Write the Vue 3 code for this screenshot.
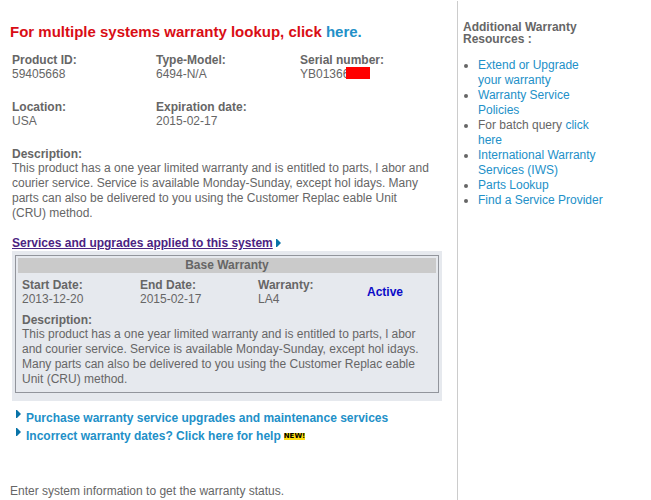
<script setup>
const description =
  'This product has a one year limited warranty and is entitled to parts, l abor and courier service. Service is available Monday-Sunday, except hol idays. Many parts can also be delivered to you using the Customer Replac eable Unit (CRU) method.'

const warrantyFields = [
  { label: 'Start Date:', value: '2013-12-20' },
  { label: 'End Date:', value: '2015-02-17' },
  { label: 'Warranty:', value: 'LA4' },
]
</script>

<template>
  <div class="page">
    <main class="main">
      <h1 class="lookup">For multiple systems warranty lookup, click <a href="#">here.</a></h1>

      <dl class="details">
        <div><dt>Product ID:</dt><dd>59405668</dd></div>
        <div><dt>Type-Model:</dt><dd>6494-N/A</dd></div>
        <div><dt>Serial number:</dt><dd class="serial">YB01366<span class="redaction"></span></dd></div>
        <div><dt>Location:</dt><dd>USA</dd></div>
        <div><dt>Expiration date:</dt><dd>2015-02-17</dd></div>
      </dl>

      <section class="description">
        <h2>Description:</h2>
        <p>{{ description }}</p>
      </section>

      <div class="services">
        <a href="#">Services and upgrades applied to this system</a>
        <svg class="arrow" viewBox="0 0 5 8" aria-hidden="true"><path d="M0 0H1L5 4L1 8H0Z" /></svg>
      </div>

      <section class="panel">
        <div class="frame">
          <h2 class="bar">Base Warranty</h2>
          <div class="summary">
            <dl class="dates">
              <div v-for="f in warrantyFields" :key="f.label"><dt>{{ f.label }}</dt><dd>{{ f.value }}</dd></div>
            </dl>
            <strong class="status">Active</strong>
          </div>
          <div class="terms">
            <h2>Description:</h2>
            <p>{{ description }}</p>
          </div>
        </div>
      </section>

      <ul class="actions">
        <li>
          <svg class="arrow" viewBox="0 0 5 8" aria-hidden="true"><path d="M0 0H1L5 4L1 8H0Z" /></svg>
          <a href="#">Purchase warranty service upgrades and maintenance services</a>
        </li>
        <li>
          <svg class="arrow" viewBox="0 0 5 8" aria-hidden="true"><path d="M0 0H1L5 4L1 8H0Z" /></svg>
          <a href="#">Incorrect warranty dates? Click here for help</a>
          <span class="new">NEW!</span>
        </li>
      </ul>

      <p class="prompt">Enter system information to get the warranty status.</p>
    </main>

    <aside class="side">
      <h2>Additional Warranty Resources :</h2>
      <ul>
        <li><a href="#">Extend or Upgrade your warranty</a></li>
        <li><a href="#">Warranty Service Policies</a></li>
        <li>For batch query <a href="#">click here</a></li>
        <li><a href="#">International Warranty Services (IWS)</a></li>
        <li><a href="#">Parts Lookup</a></li>
        <li><a href="#">Find a Service Provider</a></li>
      </ul>
    </aside>
  </div>
</template>

<style>
body {
  margin: 0;
  background: #fff;
}
</style>

<style scoped>
.page {
  display: grid;
  grid-template-columns: minmax(0, 1fr) 194px;
  min-height: 100vh;
  box-sizing: border-box;
  padding-top: 1px;
  font: 12px/15px "Liberation Sans", Arial, sans-serif;
  color: #666;
}
h1, h2, p, dl, dd, ul {
  margin: 0;
  padding: 0;
}
h2, dt {
  font-size: 12px;
  font-weight: bold;
  line-height: 14px;
}
dd {
  line-height: 14px;
}
a {
  color: #2290c8;
  text-decoration: none;
}
.main {
  padding: 22px 15px 0 12px;
}
.lookup {
  margin: 0 0 12px -2px;
  font-size: 15px;
  line-height: 18px;
  color: #d90d15;
}
.details {
  display: grid;
  grid-template-columns: 144px 144px 1fr;
  row-gap: 19px;
}
.serial {
  position: relative;
}
.redaction {
  position: absolute;
  left: 46px;
  top: 0;
  width: 24px;
  height: 12px;
  background: #f00;
}
.description {
  margin-top: 19px;
  padding-right: 10px;
}
.services {
  display: flex;
  align-items: center;
  gap: 3px;
  margin-top: 14px;
  line-height: 16px;
  font-weight: bold;
}
.services a {
  color: #4b2382;
  text-decoration: underline;
}
.arrow {
  flex: none;
  width: 5px;
  height: 8px;
  fill: #0873a8;
}
.panel {
  padding: 4px 3px 8px;
  background: #e6e9ee;
}
.frame {
  padding: 2px 2px 5px;
  border: 1px solid #92959c;
}
.bar {
  background: #cacaca;
  text-align: center;
  line-height: 15px;
}
.summary {
  display: flex;
  align-items: center;
  padding: 5px 4px 0;
}
.dates {
  flex: 1;
  display: grid;
  grid-template-columns: 118px 118px 1fr;
}
.status {
  padding-right: 29px;
  color: #0b0bc8;
}
.terms {
  padding: 7px 8px 0 4px;
}
.actions {
  padding: 8px 4px 0;
  list-style: none;
  line-height: 18px;
  font-weight: bold;
}
.actions li {
  display: flex;
  align-items: center;
}
.actions .arrow {
  align-self: flex-start;
  margin: 1px 5px 0 0;
}
.new {
  margin-left: 3px;
  width: 21px;
  background: #fd1;
  color: #000;
  font: bold 7px/7px "DejaVu Sans", sans-serif;
  text-align: center;
}
.prompt {
  margin: 39px 0 0 -2px;
}
.side {
  padding: 20px 46px 0 5px;
  border-left: 1px solid #ccc;
}
.side h2 {
  line-height: 12px;
}
.side ul {
  margin-top: 13px;
  padding-left: 15px;
}
</style>
